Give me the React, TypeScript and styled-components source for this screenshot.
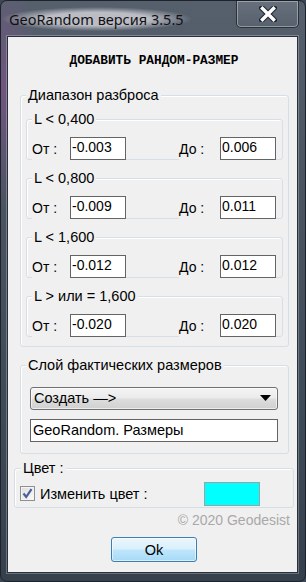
import React from "react"
import styled, { createGlobalStyle } from "styled-components"

const GlobalStyle = createGlobalStyle`
  html, body {
    margin: 0;
    padding: 0;
    background: #3c4654;
  }
  body {
    font-family: "Liberation Sans", Arial, sans-serif;
  }
`

const Window = styled.div`
  width: 306px;
  height: 582px;
  box-sizing: border-box;
  display: flex;
  flex-direction: column;
  padding: 0 7px 8px 6px;
  border: 1px solid #1c232c;
  border-radius: 7px;
  background:
    radial-gradient(ellipse 40px 120px at 0px 90px, rgba(140, 80, 150, 0.55), transparent),
    linear-gradient(180deg, #56606d 0%, #4b5562 30%, #3f4a58 70%, #36404d 100%);
`

const TitleBar = styled.div`
  height: 35px;
  display: flex;
  align-items: flex-start;
`

const Title = styled.span`
  margin: 6px 0 0 -6px;
  padding: 2px 8px;
  border-radius: 10px;
  background: radial-gradient(ellipse closest-side, rgba(205, 205, 212, 0.85) 55%, rgba(205, 205, 212, 0) 100%);
  font-family: "Noto Sans", "Open Sans", sans-serif;
  font-size: 14.5px;
  line-height: 20px;
  color: #111111;
`

const CloseButton = styled.div`
  margin: -1px -1px 0 auto;
  width: 63px;
  height: 28px;
  box-sizing: border-box;
  display: flex;
  align-items: center;
  justify-content: center;
  border: 1px solid rgba(20, 25, 32, 0.7);
  border-radius: 0 0 5px 5px;
  box-shadow: inset 0 0 0 1px rgba(255, 255, 255, 0.35);
  background: linear-gradient(180deg, rgba(255, 255, 255, 0.1), rgba(255, 255, 255, 0.02));
`

const Client = styled.div`
  flex: 1;
  display: flex;
  flex-direction: column;
  background: #f0f0f0;
  border: 1px solid #27303b;
  box-shadow: 0 0 0 1px rgba(255, 255, 255, 0.25);
  padding-top: 16px;
`

const Heading = styled.div`
  padding-left: 3px;
  text-align: center;
  font-family: "Liberation Mono", "DejaVu Sans Mono", monospace;
  font-weight: bold;
  font-size: 12.8px;
  line-height: 15px;
  color: #000;
`

const Group = styled.div<{ $margin: string; $padding: string }>`
  display: flex;
  flex-direction: column;
  border: 1px solid #d5dfe5;
  border-radius: 3px;
  box-shadow: inset 1px 1px 0 #fff;
  margin: ${(p) => p.$margin};
  padding: ${(p) => p.$padding};
`

const Legend = styled.span<{ $indent: number }>`
  align-self: flex-start;
  margin: -8px 0 0 ${(p) => p.$indent}px;
  padding: 0 2px;
  background: #f0f0f0;
  font-size: 14.5px;
  line-height: 15px;
  color: #000;
`

const RangeStack = styled.div`
  display: flex;
  flex-direction: column;
  gap: 18px;
  margin-top: 16px;
`

const RangeRow = styled.div`
  display: flex;
  justify-content: space-between;
  align-items: center;
  margin: 10px 0 -1px 0;
  padding: 0 6px 0 5px;
`

const Pair = styled.div`
  display: flex;
  align-items: center;
`

const FieldLabel = styled.span<{ $width: number }>`
  width: ${(p) => p.$width}px;
  height: 23px;
  line-height: 25px;
  background: #f0f0f0;
  font-size: 14px;
  color: #000;
`

const NumberBox = styled.input`
  width: 56px;
  height: 23px;
  box-sizing: border-box;
  margin: 0;
  padding: 0 0 3px 1px;
  border: 1px solid #646464;
  background: #fff;
  font-family: "Liberation Sans", Arial, sans-serif;
  font-size: 14px;
  color: #000;
  outline: none;
`

const Select = styled.div`
  margin-top: 14px;
  height: 23px;
  box-sizing: border-box;
  display: flex;
  align-items: center;
  justify-content: space-between;
  padding: 0 6px 1px 3px;
  border: 1px solid #707070;
  border-radius: 3px;
  background: linear-gradient(180deg, #f4f4f4 0%, #ebebeb 48%, #dddddd 52%, #d0d0d0 100%);
  box-shadow: inset 0 0 0 1px rgba(255, 255, 255, 0.6);
  font-size: 14.5px;
  color: #000;
`

const TextBox = styled.input`
  margin-top: 9px;
  height: 23px;
  box-sizing: border-box;
  padding: 0 0 2px 2px;
  border: 1px solid #646464;
  background: #fff;
  font-family: "Liberation Sans", Arial, sans-serif;
  font-size: 14.5px;
  color: #000;
  outline: none;
`

const ColorRow = styled.div`
  display: flex;
  align-items: center;
  margin-top: 6px;
  height: 23px;
`

const CheckBox = styled.span`
  width: 15px;
  height: 15px;
  box-sizing: border-box;
  display: flex;
  align-items: center;
  justify-content: center;
  border: 1px solid #8e8f8f;
  background: linear-gradient(135deg, #dcdcdc, #fbfbfb);
  box-shadow: inset 0 0 0 1px #f4f4f4;
`

const CheckText = styled.span`
  margin-left: 5px;
  font-size: 14.5px;
  color: #000;
`

const Swatch = styled.span<{ $color: string }>`
  margin: 0 33px 0 auto;
  width: 56px;
  height: 24px;
  box-sizing: border-box;
  border: 1px solid #a0a0a0;
  background: ${(p) => p.$color};
`

const Copyright = styled.div`
  align-self: flex-end;
  margin: 5px 7px 0 0;
  font-size: 14px;
  line-height: 15px;
  color: #a9a9a9;
`

const OkButton = styled.button`
  align-self: flex-start;
  margin: 9px 0 0 103px;
  width: 86px;
  height: 25px;
  padding: 0;
  border: 1px solid #3c7fb1;
  border-radius: 3px;
  background: linear-gradient(180deg, #eaf6fd 0%, #d9f0fc 48%, #bee6fd 52%, #a7d9f5 100%);
  box-shadow: inset 0 0 0 1px rgba(255, 255, 255, 0.55);
  font-family: "Liberation Sans", Arial, sans-serif;
  font-size: 14.5px;
  color: #000;
`

const ranges = [
  { label: "L < 0,400", from: "-0.003", to: "0.006" },
  { label: "L < 0,800", from: "-0.009", to: "0.011" },
  { label: "L < 1,600", from: "-0.012", to: "0.012" },
  { label: "L > или = 1,600", from: "-0.020", to: "0.020" },
]

const CloseIcon = () => (
  <svg width="18" height="16" viewBox="0 0 18 16">
    <path d="M3 2 L15 14 M15 2 L3 14" stroke="#1e2630" strokeWidth="5.5" strokeLinecap="square" />
    <path d="M3.5 2.5 L14.5 13.5 M14.5 2.5 L3.5 13.5" stroke="#ffffff" strokeWidth="3.4" strokeLinecap="square" />
  </svg>
)

const CheckMark = () => (
  <svg width="11" height="11" viewBox="0 0 11 11">
    <path d="M1.5 5.5 L4.2 9 L9.5 1.2" fill="none" stroke="#4a5e9a" strokeWidth="2.2" />
  </svg>
)

const Arrow = () => (
  <svg width="11" height="6" viewBox="0 0 11 6">
    <path d="M0 0 H11 L5.5 6 Z" fill="#000" />
  </svg>
)

export default function App() {
  return (
    <>
      <GlobalStyle />
      <Window>
        <TitleBar>
          <Title>GeoRandom версия 3.5.5</Title>
          <CloseButton>
            <CloseIcon />
          </CloseButton>
        </TitleBar>
        <Client>
          <Heading>ДОБАВИТЬ РАНДОМ-РАЗМЕР</Heading>

          <Group $margin="27px 8px 0 12px" $padding="0 5px 9px 5px">
            <Legend $indent={0}>Диапазон разброса</Legend>
            <RangeStack>
              {ranges.map((r) => (
                <Group key={r.label} $margin="0" $padding="0">
                  <Legend $indent={5}>{r.label}</Legend>
                  <RangeRow>
                    <Pair>
                      <FieldLabel $width={38}>От :</FieldLabel>
                      <NumberBox readOnly value={r.from} />
                    </Pair>
                    <Pair>
                      <FieldLabel $width={41}>До :</FieldLabel>
                      <NumberBox readOnly value={r.to} />
                    </Pair>
                  </RangeRow>
                </Group>
              ))}
            </RangeStack>
          </Group>

          <Group $margin="18px 8px 0 12px" $padding="0 10px 11px 9px">
            <Legend $indent={-4}>Слой фактических размеров</Legend>
            <Select>
              <span>Создать —&gt;</span>
              <Arrow />
            </Select>
            <TextBox readOnly value="GeoRandom. Размеры" />
          </Group>

          <Group $margin="14px 3px 0 6px" $padding="0 0 2px 5px">
            <Legend $indent={1}>Цвет :</Legend>
            <ColorRow>
              <CheckBox>
                <CheckMark />
              </CheckBox>
              <CheckText>Изменить цвет :</CheckText>
              <Swatch $color="#00ffff" />
            </ColorRow>
          </Group>

          <Copyright>© 2020 Geodesist</Copyright>
          <OkButton>Ok</OkButton>
        </Client>
      </Window>
    </>
  )
}
